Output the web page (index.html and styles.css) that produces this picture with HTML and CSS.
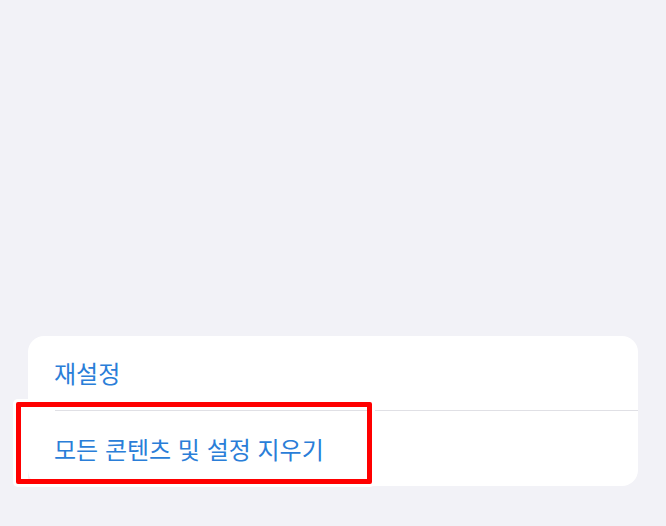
FILE: index.html
```html
<!DOCTYPE html>
<html lang="ko">
<head>
<meta charset="utf-8">
<link rel="stylesheet" href="styles.css">
</head>
<body>
<main class="page">
  <section class="card">
    <div class="row"><span class="label">재설정</span></div>
    <div class="sep"></div>
    <div class="row"><span class="label">모든 콘텐츠 및 설정 지우기</span></div>
  </section>
  <div class="highlight"></div>
</main>
</body>
</html>
```
FILE: styles.css
```css
html, body {
  margin: 0;
  padding: 0;
  background: #f2f2f7;
}
.page {
  position: relative;
  width: 666px;
  height: 526px;
  box-sizing: border-box;
  padding: 336px 28px 0 28px;
  font-family: "Noto Sans CJK KR", "Noto Sans", sans-serif;
}
.card {
  width: 610px;
  height: 150px;
  background: #ffffff;
  border-radius: 16px;
  display: flex;
  flex-direction: column;
}
.row {
  height: 74px;
  display: flex;
  align-items: center;
  padding-left: 26px;
}
.row:last-child {
  height: 75px;
}
.label {
  color: #2a7ed8;
  font-size: 24px;
  line-height: 1;
}
.sep {
  height: 1px;
  margin-left: 27px;
  background: #e0e0e5;
}
.highlight {
  position: absolute;
  left: 16px;
  top: 402px;
  width: 356px;
  height: 82px;
  box-sizing: border-box;
  border: 5px solid #ff0000;
  border-radius: 2px;
  box-shadow: 0 0 0 3px #ffffff;
  background: linear-gradient(to right, #ffffff 0 7px, transparent 7px);
}
```
